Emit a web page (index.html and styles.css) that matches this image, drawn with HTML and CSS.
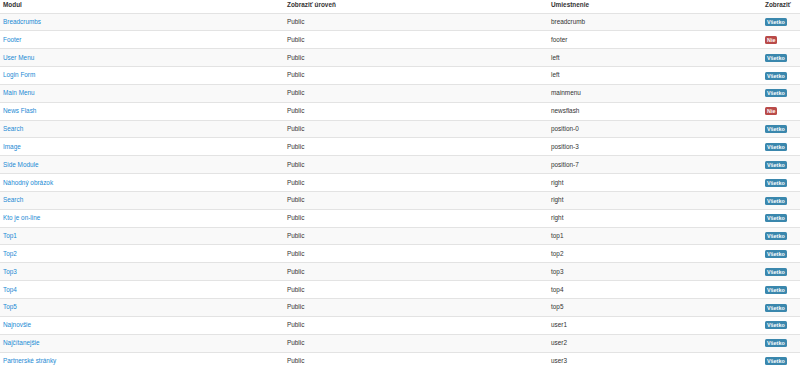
FILE: index.html
```html
<!DOCTYPE html>
<html lang="sk">

<head>
    <meta charset="UTF-8">
    <meta name="viewport" content="width=device-width, initial-scale=1.0">
    <title>Moduly</title>
    <link rel="stylesheet" href="styles.css">
</head>

<body>
    <table class="modules">
        <thead>
            <tr>
                <th class="col-title">Modul</th>
                <th class="col-access">Zobraziť úroveň</th>
                <th class="col-position">Umiestnenie</th>
                <th class="col-pages">Zobraziť</th>
            </tr>
        </thead>
        <tbody>
            <tr><td><a href="#">Breadcrumbs</a></td><td>Public</td><td>breadcrumb</td><td><span class="badge badge-info">Všetko</span></td></tr>
            <tr><td><a href="#">Footer</a></td><td>Public</td><td>footer</td><td><span class="badge badge-important">Nie</span></td></tr>
            <tr><td><a href="#">User Menu</a></td><td>Public</td><td>left</td><td><span class="badge badge-info">Všetko</span></td></tr>
            <tr><td><a href="#">Login Form</a></td><td>Public</td><td>left</td><td><span class="badge badge-info">Všetko</span></td></tr>
            <tr><td><a href="#">Main Menu</a></td><td>Public</td><td>mainmenu</td><td><span class="badge badge-info">Všetko</span></td></tr>
            <tr><td><a href="#">News Flash</a></td><td>Public</td><td>newsflash</td><td><span class="badge badge-important">Nie</span></td></tr>
            <tr><td><a href="#">Search</a></td><td>Public</td><td>position-0</td><td><span class="badge badge-info">Všetko</span></td></tr>
            <tr><td><a href="#">Image</a></td><td>Public</td><td>position-3</td><td><span class="badge badge-info">Všetko</span></td></tr>
            <tr><td><a href="#">Side Module</a></td><td>Public</td><td>position-7</td><td><span class="badge badge-info">Všetko</span></td></tr>
            <tr><td><a href="#">Náhodný obrázok</a></td><td>Public</td><td>right</td><td><span class="badge badge-info">Všetko</span></td></tr>
            <tr><td><a href="#">Search</a></td><td>Public</td><td>right</td><td><span class="badge badge-info">Všetko</span></td></tr>
            <tr><td><a href="#">Kto je on-line</a></td><td>Public</td><td>right</td><td><span class="badge badge-info">Všetko</span></td></tr>
            <tr><td><a href="#">Top1</a></td><td>Public</td><td>top1</td><td><span class="badge badge-info">Všetko</span></td></tr>
            <tr><td><a href="#">Top2</a></td><td>Public</td><td>top2</td><td><span class="badge badge-info">Všetko</span></td></tr>
            <tr><td><a href="#">Top3</a></td><td>Public</td><td>top3</td><td><span class="badge badge-info">Všetko</span></td></tr>
            <tr><td><a href="#">Top4</a></td><td>Public</td><td>top4</td><td><span class="badge badge-info">Všetko</span></td></tr>
            <tr><td><a href="#">Top5</a></td><td>Public</td><td>top5</td><td><span class="badge badge-info">Všetko</span></td></tr>
            <tr><td><a href="#">Najnovšie</a></td><td>Public</td><td>user1</td><td><span class="badge badge-info">Všetko</span></td></tr>
            <tr><td><a href="#">Najčítanejšie</a></td><td>Public</td><td>user2</td><td><span class="badge badge-info">Všetko</span></td></tr>
            <tr><td><a href="#">Partnerské stránky</a></td><td>Public</td><td>user3</td><td><span class="badge badge-info">Všetko</span></td></tr>
        </tbody>
    </table>
</body>

</html>
```

FILE: styles.css
```css
* {
    margin: 0;
    padding: 0;
    box-sizing: border-box;
}

body {
    font-family: 'Liberation Sans', Arial, sans-serif;
    font-size: 6.4px;
    color: #333;
    background: #fff;
}

.modules {
    width: 100%;
    border-collapse: collapse;
    table-layout: fixed;
}

.col-title {
    width: 284px;
}

.col-access {
    width: 264px;
}

.col-position {
    width: 214px;
}

.modules th {
    height: 13px;
    padding: 0 3px 4px;
    text-align: left;
    vertical-align: bottom;
    font-weight: bold;
    line-height: 8px;
}

.modules td {
    height: 17.85px;
    padding: 0 3px;
    border-top: 1px solid #e3e3e3;
    vertical-align: middle;
    line-height: 8px;
}

.modules tbody tr:nth-child(odd) td {
    background: #f9f9f9;
}

.modules a {
    color: #1a8ad4;
    text-decoration: none;
}

.badge {
    display: inline-block;
    padding: 0 2px;
    border-radius: 1.5px;
    font-size: 5.4px;
    font-weight: bold;
    line-height: 8px;
    color: #fff;
    white-space: nowrap;
    vertical-align: middle;
}

.badge-info {
    background: #3a87ad;
}

.badge-important {
    background: #b94a48;
}
```
